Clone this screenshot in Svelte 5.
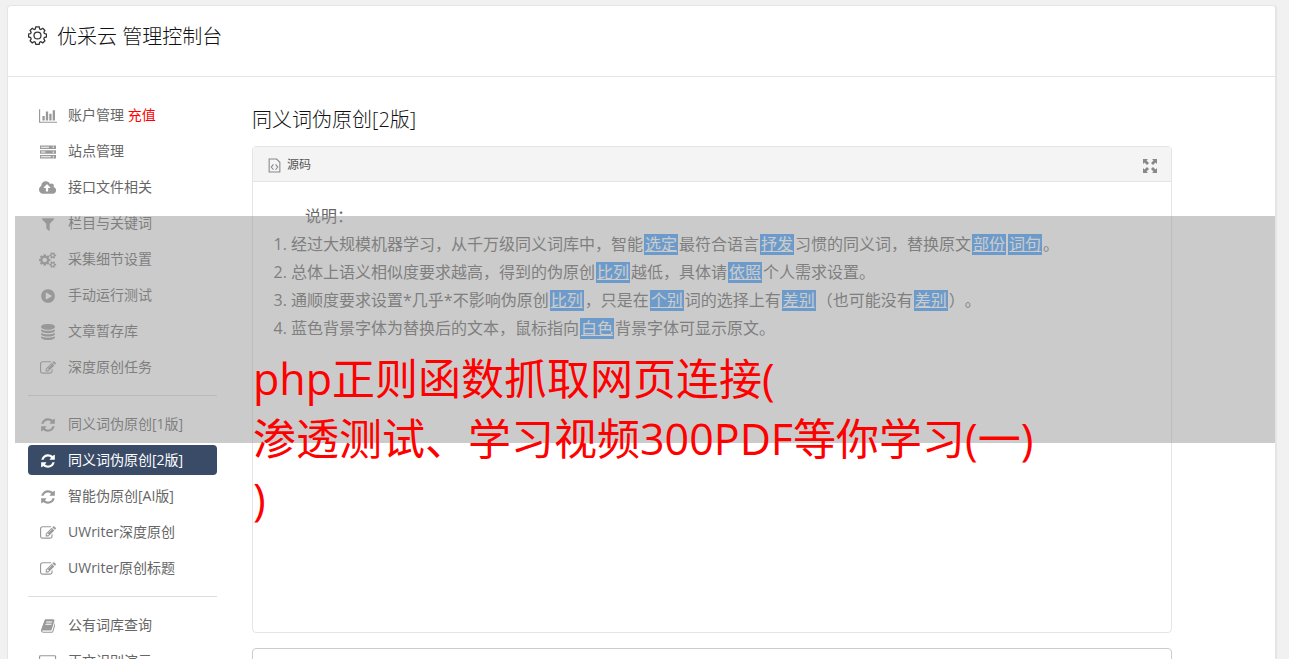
<script lang="ts">
	type Item = { label: string; icon: string; extra?: string; active?: boolean };

	const smallCog =
		'v140q0 16-149 31-12 27-30 52 51 113 51 138 0 4-4 7-122 71-124 71-8 0-46-47t-52-68q-20 2-30 2t-30-2q-14 21-52 68t-46 47q-2 0-124-71-4-3-4-7 0-25 51-138-18-25-30-52-149-15-149-31v-140q0-16 149-31 13-29 30-52-51-113-51-138 0-4 4-7 4-2 35-20t59-34 30-16q8 0 46 46.5t52 67.5q20-2 30-2t30 2q51-71 92-112l6-2q4 0 124 70 4 3 4 7 0 25-51 138 17 23 30 52 149 15 149 31z';

	// [width in font units, path]
	const icons: Record<string, [number, string]> = {
		chart: [2048, 'M640 896v512h-256v-512h256zm384-512v1024h-256v-1024h256zm1024 1152v128h-2048v-1536h128v1408h1920zm-640-896v768h-256v-768h256zm384-384v1152h-256v-1152h256z'],
		server: [1792, 'M0 160h1792v400h-1792zM110 300v120h890v-120zM1420 290v140h140v-140zM0 696h1792v400h-1792zM110 836v120h500v-120zM1420 826v140h140v-140zM0 1232h1792v400h-1792zM110 1372v120h1100v-120zM1420 1362v140h140v-140z'],
		cloud: [1920, 'M1280 864q0-14-9-23l-352-352q-9-9-23-9t-23 9l-351 351q-10 12-10 24 0 14 9 23t23 9h224v352q0 13 9.5 22.5t22.5 9.5h192q13 0 22.5-9.5t9.5-22.5v-352h224q13 0 22.5-9.5t9.5-22.5zm640 288q0 159-112.5 271.5t-271.5 112.5h-1088q-185 0-316.5-131.5t-131.5-316.5q0-130 70-240t188-165q-2-30-2-43 0-212 150-362t362-150q156 0 285.5 87t188.5 231q71-62 166-62 106 0 181 75t75 181q0 76-41 138 130 31 213.5 135.5t83.5 238.5z'],
		filter: [1792, 'M1595 295q17 41-14 70l-493 493v742q0 42-39 59-13 5-25 5-27 0-45-19l-256-256q-19-19-19-45v-486l-493-493q-31-29-14-70 17-39 59-39h1280q42 0 59 39z'],
		cogs: [1920, 'M896 896q0-106-75-181t-181-75-181 75-75 181 75 181 181 75 181-75 75-181zm768 512q0-52-38-90t-90-38-90 38-38 90q0 53 37.5 90.5t90.5 37.5 90.5-37.5 37.5-90.5zm0-1024q0-52-38-90t-90-38-90 38-38 90q0 53 37.5 90.5t90.5 37.5 90.5-37.5 37.5-90.5zm-384 421v185q0 10-7 19.5t-16 10.5l-155 24q-11 35-32 76 34 48 90 115 7 11 7 20 0 12-7 19-23 30-82.5 89.5t-78.5 59.5q-11 0-21-7l-115-90q-37 19-77 31-11 108-23 155-7 24-30 24h-186q-11 0-20-7.5t-10-17.5l-23-153q-34-10-75-31l-118 89q-7 7-20 7-11 0-21-8-144-133-144-160 0-9 7-19 10-14 41-53t47-61q-23-44-35-82l-152-24q-10-1-17-9.5t-7-19.5v-185q0-10 7-19.5t16-10.5l155-24q11-35 32-76-34-48-90-115-7-11-7-20 0-12 7-20 22-30 82-89t79-59q11 0 21 7l115 90q34-18 77-32 11-108 23-154 7-24 30-24h186q11 0 20 7.5t10 17.5l23 153q34 10 75 31l118-89q8-7 20-7 11 0 21 8 144 133 144 160 0 8-7 19-12 16-42 54t-45 60q23 48 34 82l152 23q10 2 17 10.5t7 19.5zm640 533' + smallCog + 'm0-1024' + smallCog],
		play: [1792, 'M896 128q209 0 385.5 103t279.5 279.5 103 385.5-103 385.5-279.5 279.5-385.5 103-385.5-103-279.5-279.5-103-385.5 103-385.5 279.5-279.5 385.5-103zm384 823q32-18 32-55t-32-55l-544-320q-31-19-64-1-32 19-32 56v640q0 37 32 56 16 8 32 8 17 0 32-9z'],
		database: [1792, 'M896 768q237 0 443-43t325-127v170q0 69-103 128t-280 93.5-385 34.5-385-34.5-280-93.5-103-128v-170q119 84 325 127t443 43zm0 768q237 0 443-43t325-127v170q0 69-103 128t-280 93.5-385 34.5-385-34.5-280-93.5-103-128v-170q119 84 325 127t443 43zm0-384q237 0 443-43t325-127v170q0 69-103 128t-280 93.5-385 34.5-385-34.5-280-93.5-103-128v-170q119 84 325 127t443 43zm0-1152q208 0 385 34.5t280 93.5 103 128v128q0 69-103 128t-280 93.5-385 34.5-385-34.5-280-93.5-103-128v-128q0-69 103-128t280-93.5 385-34.5z'],
		edit: [1792, 'M888 1184l116-116-152-152-116 116v56h96v96h56zm440-720q-16-16-33 1l-350 350q-17 17-1 33t33-1l350-350q17-17 1-33zm80 594v190q0 119-84.5 203.5t-203.5 84.5h-832q-119 0-203.5-84.5t-84.5-203.5v-832q0-119 84.5-203.5t203.5-84.5h832q63 0 117 25 15 7 18 23 3 17-9 29l-49 49q-14 14-32 8-23-6-45-6h-832q-66 0-113 47t-47 113v832q0 66 47 113t113 47h832q66 0 113-47t47-113v-126q0-13 9-22l64-64q15-15 35-7t20 29zm-96-738l288 288-672 672h-288v-288zm444 132l-92 92-288-288 92-92q28-28 68-28t68 28l152 152q28 28 28 68t-28 68z'],
		refresh: [1792, 'M1639 1056q0 5-1 7-64 268-268 434.5t-478 166.5q-146 0-282.5-55t-243.5-157l-129 129q-19 19-45 19t-45-19-19-45v-448q0-26 19-45t45-19h448q26 0 45 19t19 45-19 45l-137 137q71 66 161 102t187 36q134 0 250-65t186-179q11-17 53-117 8-23 30-23h192q13 0 22.5 9.5t9.5 22.5zm25-800v448q0 26-19 45t-45 19h-448q-26 0-45-19t-19-45 19-45l138-138q-148-137-349-137-134 0-250 65t-186 179q-11 17-53 117-8 23-30 23h-199q-13 0-22.5-9.5t-9.5-22.5v-7q65-268 270-434.5t480-166.5q146 0 284 55.5t245 156.5l130-129q19-19 45-19t45 19 19 45z'],
		book: [1664, 'M1639 478q40 57 18 129l-275 906q-19 64-76.5 107.5t-122.5 43.5h-923q-77 0-148.5-53.5t-99.5-131.5q-24-67-2-127 0-4 3-27t4-37q1-8-3-21.5t-3-19.5q2-11 8-21t16.5-23.5 16.5-23.5q23-38 45-91.5t30-91.5q3-10 .5-30t-.5-28q3-11 17-28t17-23q21-36 42-92t25-90q1-9-2.5-32t.5-28q4-13 22-30.5t22-22.5q19-26 42.5-84.5t27.5-96.5q1-8-3-25.5t-2-26.5q2-8 9-18t18-23 17-21q8-12 16.5-30.5t15-35 16-36 19.5-32 26.5-23.5 36-11.5 47.5 5.5l-1 3q38-9 51-9h761q74 0 114 56t18 130l-274 906q-36 119-71.5 153.5t-128.5 34.5h-869q-27 0-38 15-11 16-1 43 24 70 144 70h923q29 0 56-15.5t35-41.5l300-987q7-22 5-57 38 15 59 43zm-1064 2q-4 13 2 22.5t20 9.5h608q13 0 25.5-9.5t16.5-22.5l21-64q4-13-2-22.5t-20-9.5h-608q-13 0-25.5 9.5t-16.5 22.5zm-83 256q-4 13 2 22.5t20 9.5h608q13 0 25.5-9.5t16.5-22.5l21-64q4-13-2-22.5t-20-9.5h-608q-13 0-25.5 9.5t-16.5 22.5z'],
		screen: [1920, 'M160 128h1600q160 0 160 160v1088q0 160-160 160h-1600q-160 0-160-160v-1088q0-160 160-160zM192 256q-64 0-64 64v1024q0 64 64 64h1536q64 0 64-64v-1024q0-64-64-64z']
	};

	const groups: Item[][] = [
		[
			{ label: '账户管理', icon: 'chart', extra: '充值' },
			{ label: '站点管理', icon: 'server' },
			{ label: '接口文件相关', icon: 'cloud' },
			{ label: '栏目与关键词', icon: 'filter' },
			{ label: '采集细节设置', icon: 'cogs' },
			{ label: '手动运行测试', icon: 'play' },
			{ label: '文章暂存库', icon: 'database' },
			{ label: '深度原创任务', icon: 'edit' }
		],
		[
			{ label: '同义词伪原创[1版]', icon: 'refresh' },
			{ label: '同义词伪原创[2版]', icon: 'refresh', active: true },
			{ label: '智能伪原创[AI版]', icon: 'refresh' },
			{ label: 'UWriter深度原创', icon: 'edit' },
			{ label: 'UWriter原创标题', icon: 'edit' }
		],
		[
			{ label: '公有词库查询', icon: 'book' },
			{ label: '正文识别演示', icon: 'screen' }
		]
	];

	// odd entries are replaced words
	const notes = [
		['经过大规模机器学习，从千万级同义词库中，智能', '选定', '最符合语言', '抒发', '习惯的同义词，替换原文', '部份', '', '词句', '。'],
		['总体上语义相似度要求越高，得到的伪原创', '比列', '越低，具体请', '依照', '个人需求设置。'],
		['通顺度要求设置*几乎*不影响伪原创', '比列', '，只是在', '个别', '词的选择上有', '差别', '（也可能没有', '差别', '）。'],
		['蓝色背景字体为替换后的文本，鼠标指向', '白色', '背景字体可显示原文。']
	];

	const banner = ['php正则函数抓取网页连接(', '渗透测试、学习视频300PDF等你学习(一)', ')'];

	let text = $state('');
</script>

<div class="page">
	<div class="card">
		<header>
			<svg class="gear" viewBox="0 0 18 18" aria-hidden="true">
				<path d="M7.4 .8h3.2l.5 2 1.1.5 1.8-1.1 2 2-1 1.8.5 1.1 2 .5v2.8l-2 .6-.5 1.2 1 1.8-2 2-1.8-1.1-1.1.5-.5 1.9H7.4l-.5-1.9-1.1-.5L4 16l-2-2 1-1.8-.5-1.2-2-.6V7.6l2-.5L3 6 2 4.2l2-2 1.8 1.1 1.1-.5z" />
				<circle cx="9" cy="9" r="3.3" />
			</svg>
			<h1>优采云 管理控制台</h1>
		</header>

		<div class="layout">
			<nav>
				{#each groups as group, i}
					{#if i > 0}<hr />{/if}
					{#each group as item}
						<a href="#top" class:active={item.active}>
							<span class="icon">
								<svg viewBox="0 0 {icons[item.icon][0]} 1792" style="width: {icons[item.icon][0] / 112}px">
									<path fill-rule={item.icon === 'server' || item.icon === 'screen' ? 'evenodd' : 'nonzero'} d={icons[item.icon][1]} />
								</svg>
							</span>
							<span class="label">{item.label}{#if item.extra}&nbsp;<em>{item.extra}</em>{/if}</span>
						</a>
					{/each}
				{/each}
			</nav>

			<main>
				<h2>同义词伪原创[2版]</h2>
				<section class="editor">
					<div class="toolbar">
						<button type="button" class="source">
							<svg viewBox="0 0 12 14" aria-hidden="true">
								<path d="M1 1h7l3 3v9H1zM5 6L3 8.5 5 11M7 6l2 2.5L7 11" />
							</svg>
							源码
						</button>
						<button type="button" class="expand" aria-label="全屏">
							<svg viewBox="0 0 14 14" aria-hidden="true">
								<path d="M0 0h5L3.5 1.5 6 4 4 6 1.5 3.5 0 5zM14 0v5l-1.5-1.5L10 6 8 4l2.5-2.5L9 0zM0 14V9l1.5 1.5L4 8l2 2-2.5 2.5L5 14zM14 14H9l1.5-1.5L8 10l2-2 2.5 2.5L14 9z" />
							</svg>
						</button>
					</div>
					<div class="content">
						<p>说明：</p>
						<ol>
							{#each notes as parts}
								<li>
									{#each parts as part, i}{#if i % 2}<mark>{part}</mark>{:else}{part}{/if}{/each}
								</li>
							{/each}
						</ol>
					</div>
				</section>
				<textarea aria-label="原文" bind:value={text}></textarea>
			</main>
		</div>
	</div>

	<div class="shade"></div>
	<div class="banner">
		{#each banner as line}
			<div>{line}</div>
		{/each}
	</div>
</div>

<style>
	:global(body) {
		margin: 0;
		background: #f1f1f1;
	}

	.page {
		position: relative;
		box-sizing: border-box;
		height: 100vh;
		overflow: hidden;
		padding: 5px 12px 0 7px;
		font-family: 'Open Sans', 'Noto Sans CJK SC', sans-serif;
		font-size: 14px;
		color: #555;
		text-spacing-trim: space-all;
	}

	.card {
		background: #fff;
		border: 1px solid #e5e5e5;
		border-right-width: 2px;
		border-radius: 4px;
	}

	header {
		display: flex;
		align-items: center;
		gap: 10px;
		padding: 16px 20px 24px;
		border-bottom: 1px solid #e5e5e5;
	}

	h1,
	h2 {
		margin: 0;
		font-size: 20px;
		font-weight: 300;
		line-height: 30px;
		color: #111;
	}

	.gear {
		width: 19px;
		height: 19px;
		margin-bottom: 4px;
		fill: none;
		stroke: #333;
		stroke-width: 1.2;
	}

	.layout {
		display: flex;
		gap: 35px;
		padding: 23px 103px 0 20px;
	}

	nav {
		flex: 0 0 189px;
		display: flex;
		flex-direction: column;
		gap: 6px;
	}

	nav a {
		display: flex;
		align-items: center;
		height: 30px;
		padding-left: 10px;
		gap: 10px;
		border-radius: 4px;
		color: #666;
		text-decoration: none;
		white-space: nowrap;
	}

	nav a.active {
		background: #3a4b67;
		color: #fff;
	}

	nav em {
		font-style: normal;
		color: #f00;
	}

	nav hr {
		width: 100%;
		margin: 7px 0;
		border: 0;
		border-top: 1px solid #ddd;
	}

	.label {
		padding-bottom: 2px;
	}

	.icon {
		display: flex;
		justify-content: center;
		width: 20px;
		fill: #999;
	}

	.active .icon {
		fill: #fff;
	}

	.icon svg {
		flex: none;
		height: 16px;
		margin-top: 1px;
	}

	main {
		flex: 1;
		min-width: 0;
		padding-top: 5px;
	}

	.editor {
		margin-top: 11px;
		border: 1px solid #e5e5e5;
		border-radius: 4px;
	}

	.toolbar {
		display: flex;
		justify-content: space-between;
		align-items: center;
		height: 34px;
		padding: 0 14px 0 15px;
		background: #f4f4f4;
		border-bottom: 1px solid #e5e5e5;
	}

	button {
		display: flex;
		align-items: center;
		padding: 0;
		border: 0;
		background: none;
		font: inherit;
		color: inherit;
	}

	.toolbar svg {
		margin-top: 3px;
	}

	.source {
		gap: 6px;
		font-size: 12px;
	}

	.source svg {
		width: 13px;
		height: 15px;
		fill: none;
		stroke: #888;
	}

	.expand svg {
		width: 14px;
		height: 14px;
		fill: #888;
	}

	.content {
		min-height: 410px;
		padding: 20px;
		font-size: 16px;
		line-height: 28px;
		color: #666;
	}

	.content p {
		margin: 0;
		text-indent: 2em;
	}

	ol {
		margin: 0;
		padding-left: 18px;
	}

	mark {
		display: inline-block;
		margin: 0 1px;
		padding: 0 1px;
		background: #419fff;
		color: #fff;
		line-height: 21px;
		text-decoration: underline;
	}

	textarea {
		display: block;
		box-sizing: border-box;
		width: 100%;
		height: 120px;
		margin-top: 15px;
		padding: 10px;
		border: 1px solid #ccc;
		border-radius: 4px;
		font: inherit;
		resize: none;
	}

	.shade {
		position: absolute;
		top: 216px;
		left: 15px;
		right: 14px;
		height: 227px;
		background: rgba(151, 151, 151, 0.5);
	}

	.banner {
		position: absolute;
		top: 349px;
		left: 253px;
		font-size: 43px;
		line-height: 60px;
		color: #f00;
		white-space: nowrap;
	}
</style>
